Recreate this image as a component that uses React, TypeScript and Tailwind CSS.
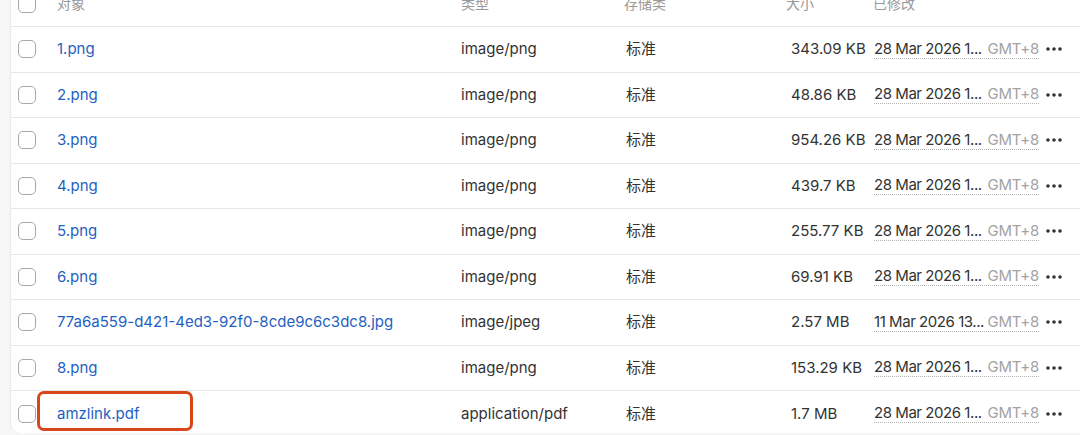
const rows = [
	{ name: "1.png", type: "image/png", size: "343.09 KB", date: "28 Mar 2026 1..." },
	{ name: "2.png", type: "image/png", size: "48.86 KB", date: "28 Mar 2026 1..." },
	{ name: "3.png", type: "image/png", size: "954.26 KB", date: "28 Mar 2026 1..." },
	{ name: "4.png", type: "image/png", size: "439.7 KB", date: "28 Mar 2026 1..." },
	{ name: "5.png", type: "image/png", size: "255.77 KB", date: "28 Mar 2026 1..." },
	{ name: "6.png", type: "image/png", size: "69.91 KB", date: "28 Mar 2026 1..." },
	{
		name: "77a6a559-d421-4ed3-92f0-8cde9c6c3dc8.jpg",
		type: "image/jpeg",
		size: "2.57 MB",
		date: "11 Mar 2026 13...",
	},
	{ name: "8.png", type: "image/png", size: "153.29 KB", date: "28 Mar 2026 1..." },
	{
		name: "amzlink.pdf",
		type: "application/pdf",
		size: "1.7 MB",
		date: "28 Mar 2026 1...",
		marked: true,
	},
];

const font = "font-['Inter','Noto_Sans_CJK_SC',sans-serif]";

const Checkbox = () => (
	<span className="block w-[18px] h-[18px] rounded-[5px] border border-[#a8a8a8] bg-white" />
);

const Dots = () => (
	<svg width="16" height="4" viewBox="0 0 16 4" className="text-[#333]">
		<circle cx="2" cy="2" r="1.8" fill="currentColor" />
		<circle cx="8" cy="2" r="1.8" fill="currentColor" />
		<circle cx="14" cy="2" r="1.8" fill="currentColor" />
	</svg>
);

const App = () => {
	return (
		<div
			className={`w-[1080px] h-[435px] overflow-hidden bg-[#f6f6f6] ${font} text-[15px] text-[#333]`}
		>
			<div className="ml-[10px] w-[1080px] h-[452px] bg-white border-l border-[#ebebeb] rounded-bl-[10px] -mt-[19px]">
				{/* header */}
				<div className="flex items-center h-[46px] border-b border-[#e6e6e6] text-[#999] text-[14px]">
					<div className="w-[46px] pl-[7px]">
						<Checkbox />
					</div>
					<div className="w-[404px]">对象</div>
					<div className="w-[163px]">类型</div>
					<div className="w-[162px]">存储类</div>
					<div className="w-[87px]">大小</div>
					<div>已修改</div>
				</div>
				{rows.map((r, i) => (
					<div
						key={r.name}
						className={`flex items-center h-[45.5px] ${i < rows.length - 1 ? "border-b border-[#e6e6e6]" : ""}`}
					>
						<div className="w-[46px] pl-[7px]">
							<Checkbox />
						</div>
						<div className="relative w-[404px] text-[#1f5fbf]">
							{r.name}
							{r.marked && (
								<span className="absolute -left-[20px] -top-[12px] w-[156px] h-[40px] border-[3px] border-[#d8461b] rounded-[7px]" />
							)}
						</div>
						<div className="w-[165px]">{r.type}</div>
						<div className="w-[165px]">标准</div>
						<div className="w-[83px]">{r.size}</div>
						<div className="flex items-center w-[165px] border-b border-dotted border-[#b5b5b5] leading-[18px]">
							<span className="w-[115px] whitespace-nowrap tracking-[-0.45px]">
								{r.date}
							</span>
							<span className="text-[#a3a3a3] tracking-[-0.2px]">GMT+8</span>
						</div>
						<div className="ml-[7px] flex items-center">
							<Dots />
						</div>
					</div>
				))}
			</div>
		</div>
	);
};

export default App;
